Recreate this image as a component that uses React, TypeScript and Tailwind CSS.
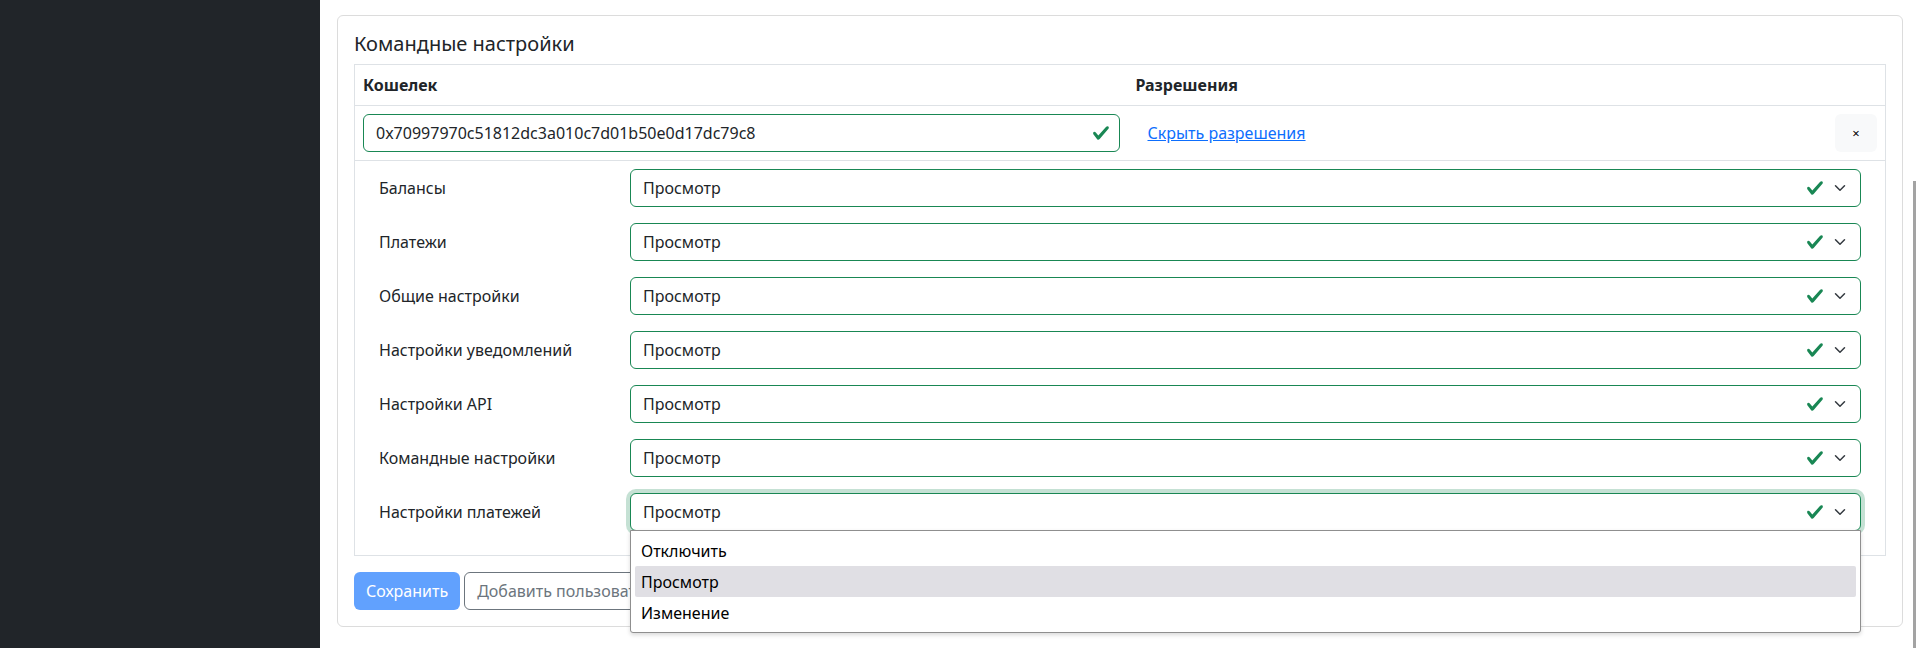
import { useState } from 'react';

const permissions = [
  'Балансы',
  'Платежи',
  'Общие настройки',
  'Настройки уведомлений',
  'Настройки API',
  'Командные настройки',
  'Настройки платежей',
];

const options = ['Отключить', 'Просмотр', 'Изменение'];

function CheckIcon({ className }: { className?: string }) {
  return (
    <svg className={className} viewBox="0 0 8 8" fill="#198754">
      <path d="M2.3 6.73.6 4.53c-.4-1.04.46-1.4 1.1-.8l1.1 1.4 3.4-3.8c.6-.63 1.6-.27 1.2.7l-4 4.6c-.43.5-.8.4-1.1.1z" />
    </svg>
  );
}

function Chevron() {
  return (
    <svg className="h-[12px] w-[16px]" viewBox="0 0 16 16">
      <path
        fill="none"
        stroke="#343a40"
        strokeLinecap="round"
        strokeLinejoin="round"
        strokeWidth={2}
        d="m2 5 6 6 6-6"
      />
    </svg>
  );
}

function ValidSelect({ value, open }: { value: string; open?: boolean }) {
  return (
    <div className="relative flex-1">
      <div
        className={`flex h-[38px] items-center rounded-md border border-[#198754] bg-white pl-3 pr-3 ${
          open ? 'shadow-[0_0_0_4px_rgba(25,135,84,0.25)]' : ''
        }`}
      >
        <span className="flex-1 text-[#212529]">{value}</span>
        <CheckIcon className="h-[18px] w-[18px]" />
        <span className="ml-[8px] flex items-center">
          <Chevron />
        </span>
      </div>

      {/* Native select popup */}
      {open && (
        <div className="absolute top-[37px] right-0 left-0 z-10 rounded-b-[3px] border border-[#8f8f8f] bg-white p-1 shadow-[0_2px_4px_rgba(0,0,0,0.15)]">
          {options.map((opt) => (
            <div
              key={opt}
              className={`flex h-[31px] items-center rounded-[2px] px-[6px] text-black ${
                opt === value ? 'bg-[#e0dfe4]' : ''
              }`}
            >
              {opt}
            </div>
          ))}
        </div>
      )}
    </div>
  );
}

export default function App() {
  const [wallet] = useState('0x70997970c51812dc3a010c7d01b50e0d17dc79c8');

  return (
    <div
      className="flex min-h-screen bg-white text-[16px] leading-6 text-[#212529]"
      style={{ fontFamily: '"Noto Sans", "Open Sans", sans-serif' }}
    >
      <aside className="w-[320px] shrink-0 bg-[#212529]" />

      <main className="relative flex-1 pt-[15px] pr-[17px] pl-[17px]">
        <div className="rounded-md border border-[#dcdcdc] p-4">
          <h5 className="mb-2 text-[20px] leading-6 font-normal">Командные настройки</h5>

          <table className="mb-4 w-full border-collapse border border-[#dee2e6]">
            <thead>
              <tr className="border-b border-[#dee2e6]">
                <th className="w-[773px] p-2 text-left font-bold">Кошелек</th>
                <th className="p-2 text-left font-bold">Разрешения</th>
                <th className="p-2" />
              </tr>
            </thead>
            <tbody>
              <tr className="border-b border-[#dee2e6]">
                <td className="p-2">
                  <div className="flex h-[38px] items-center rounded-md border border-[#198754] pr-[9px] pl-3">
                    <span className="flex-1">{wallet}</span>
                    <CheckIcon className="h-[18px] w-[18px]" />
                  </div>
                </td>
                <td className="p-2">
                  <a href="#" className="ml-3 text-[#0d6efd] underline">
                    Скрыть разрешения
                  </a>
                </td>
                <td className="w-[58px] p-2">
                  <button className="flex h-[38px] w-[42px] items-center justify-center rounded-md bg-[#f8f9fa] text-[13px] text-black">
                    ×
                  </button>
                </td>
              </tr>
              <tr className="border-b border-[#dee2e6]">
                <td colSpan={3} className="p-2">
                  <div className="px-4">
                    {permissions.map((p, i) => (
                      <div key={p} className="mb-4 flex items-center">
                        <label className="w-[251px] shrink-0">{p}</label>
                        <ValidSelect value="Просмотр" open={i === permissions.length - 1} />
                      </div>
                    ))}
                  </div>
                </td>
              </tr>
            </tbody>
          </table>

          <div className="flex gap-1">
            <button className="h-[38px] rounded-md bg-[#61a1fe] px-3 text-white">Сохранить</button>
            <button className="h-[38px] rounded-md border border-[#6c757d] px-3 text-[#6c757d]">
              Добавить пользователя
            </button>
          </div>
        </div>

        {/* Scrollbar thumb */}
        <div className="absolute top-[181px] right-[4px] bottom-0 w-[3px] bg-[#a3a3a3]" />
      </main>
    </div>
  );
}
